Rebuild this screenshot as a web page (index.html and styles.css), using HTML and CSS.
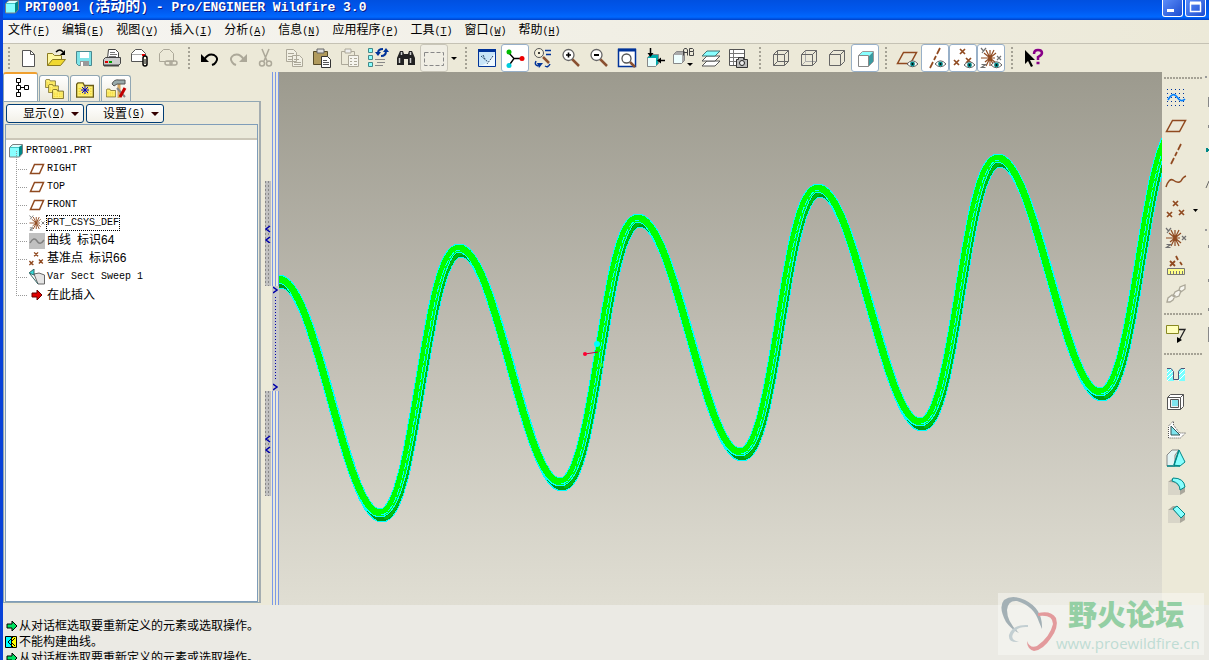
FILE: index.html
```
<!DOCTYPE html>
<html lang="zh-CN">
<head>
    <meta charset="UTF-8">
    <meta name="viewport" content="width=device-width, initial-scale=1.0">
    <title>PRT0001 (活动的) - Pro/ENGINEER Wildfire 3.0</title>
    <link rel="stylesheet" href="styles.css">
</head>
<body>
    <!-- shared icon shapes -->
    <svg class="defs" width="0" height="0" aria-hidden="true">
        <symbol id="plane" viewBox="0 0 24 24"><path d="M8.500 6.500h13l-6 11h-13z" fill="none" stroke="#904a20" stroke-width="1.500"/></symbol>
        <symbol id="plane-small" viewBox="0 0 16 16"><path d="M5.500 3.500h9l-4 9h-9z" fill="none" stroke="#904a20" stroke-width="1.500"/></symbol>
        <symbol id="axis" viewBox="0 0 24 24"><path d="M17 2l-3 6M13 10l-2 4M10 16l-3 6" stroke="#904a20" stroke-width="1.700"/></symbol>
        <symbol id="points" viewBox="0 0 24 24"><path d="M9 3l5 5M14 3l-5 5M3 14l5 5M8 14l-5 5M15 12l5 5M20 12l-5 5" stroke="#904a20" stroke-width="1.700"/></symbol>
        <symbol id="csys" viewBox="0 0 24 24">
            <path d="M2 12h14M11 4v16M7 4l8 16M15 4L7 20M5 7l12 10M17 7L6 16" stroke="#904a20" stroke-width="1.200"/>
            <path d="M2 2l2.500 3L7 2M4.500 5L3 7M18 10l4 4M22 10l-4 4M2.500 18.500h4l-4 3h4" fill="none" stroke="#707070" stroke-width="1.200"/>
        </symbol>
        <symbol id="eye" viewBox="0 0 12 8"><path d="M0 4q6-7 12 0q-6 6-12 0z" fill="#fff" stroke="#555"/><circle cx="6" cy="4" r="2.600" fill="#088"/><circle cx="6" cy="4" r="1" fill="#000"/></symbol>
        <symbol id="part" viewBox="0 0 14 14"><path d="M1 3l3-2h9v9l-3 3H1z" fill="#088"/><path d="M1 3l3-2h9l-3 2z" fill="#dff"/><path d="M1 3.500h9V13H1z" fill="#8ff"/><path d="M.5 3.500l3-3h10v9l-3 3.500H.5z" fill="none" stroke="#7a8080"/></symbol>
        <symbol id="lens" viewBox="0 0 24 24"><path d="M13 13l7 7" stroke="#8a5030" stroke-width="2.500"/><circle cx="9.500" cy="9" r="5.500" fill="#fff" stroke="#666" stroke-width="1.300"/></symbol>
        <symbol id="arrow" viewBox="0 0 12 12"><path d="M1 4h5V1l5 5l-5 5V8H1z"/></symbol>
        <symbol id="folder" viewBox="0 0 14 12"><path d="M.5 11.500v-10l1-1h4l1 2h7v9z" fill="#fff176" stroke="#6a5c18"/><path d="M2 5h10M2 7h10M2 9h10" stroke="#f0d430" stroke-dasharray="2 1"/></symbol>
    </svg>

    <div class="window">
        <header class="titlebar">
            <svg class="app-icon" width="14" height="14"><use href="#part"/></svg>
            <h1 class="title">PRT0001 (<span class="zh">活动的</span>) - Pro/ENGINEER Wildfire 3.0</h1>
            <div class="win-buttons">
                <button class="win-btn" aria-label="Minimize"><svg width="19" height="16"><path d="M4 9h7v3H4z" fill="#fff"/></svg></button>
                <button class="win-btn" aria-label="Maximize"><svg width="19" height="16"><path d="M4.500 3.500h10v8h-10z" fill="none" stroke="#fff" stroke-width="1.500"/><path d="M4 3h11" stroke="#fff" stroke-width="3"/></svg></button>
            </div>
        </header>

        <nav class="menubar">
            <button class="menu">文件<span class="en">(<u>F</u>)</span></button>
            <button class="menu">编辑<span class="en">(<u>E</u>)</span></button>
            <button class="menu">视图<span class="en">(<u>V</u>)</span></button>
            <button class="menu">插入<span class="en">(<u>I</u>)</span></button>
            <button class="menu">分析<span class="en">(<u>A</u>)</span></button>
            <button class="menu">信息<span class="en">(<u>N</u>)</span></button>
            <button class="menu">应用程序<span class="en">(<u>P</u>)</span></button>
            <button class="menu">工具<span class="en">(<u>T</u>)</span></button>
            <button class="menu">窗口<span class="en">(<u>W</u>)</span></button>
            <button class="menu">帮助<span class="en">(<u>H</u>)</span></button>
        </nav>

        <div class="toolbar">
            <span class="sep"></span>
            <button class="tool" aria-label="New"><svg class="icon"><path d="M6.500 4.500h8l4 4v12h-12z" fill="#fff" stroke="#555"/><path d="M14.500 4.500v4h4" fill="none" stroke="#555"/></svg></button>
            <button class="tool" aria-label="Open"><svg class="icon"><path d="M3.500 19.500v-12h5l2 2h7v4" fill="#fff8a0" stroke="#8a7a20"/><path d="M3.500 19.500l5-6h13l-5 6z" fill="#f0d830" stroke="#8a7a20"/><path d="M12 6q4-4 7 0" fill="none" stroke="#000" stroke-width="1.500"/><path d="M21 4v5h-5z"/></svg></button>
            <button class="tool" aria-label="Save"><svg class="icon"><path d="M4.500 5.500h15v14h-13l-2-2z" fill="#7fe4e8" stroke="#4a8890"/><path d="M8 6h9v6H8z" fill="#fff"/><path d="M8 15h9v5H8z" fill="#999"/><path d="M9 16h2v4H9z" fill="#fff"/></svg></button>
            <button class="tool" aria-label="Print"><svg class="icon"><path d="M8.500 3.500h7l3 3v6h-11z" fill="#fff" stroke="#444"/><path d="M10 6.500h5M10 8.500h7M9 10.500h7" stroke="#777"/><path d="M3.500 13.500l2-2h15v6l-2 2h-15z" fill="#ccc" stroke="#444"/><path d="M5 15h3v2H5z" fill="#d00"/><path d="M9 15h3v2H9z" fill="#090"/><path d="M4 19.500h15" stroke="#444" stroke-width="2"/></svg></button>
            <button class="tool" aria-label="Send"><svg class="icon"><path d="M3.500 15.500v-8l4-4h6l4 4v8z" fill="#fff" stroke="#555"/><path d="M4 8.500h13" stroke="#aaa"/><path d="M14 8h3v2h-3z" fill="#e00"/><rect x="15" y="10" width="4" height="10" rx="2" fill="#ffe" stroke="#000" stroke-width="1.500"/><path d="M17 13v5" stroke="#000"/></svg></button>
            <button class="tool" aria-label="Send link" disabled><svg class="icon"><path d="M3.500 15.500v-8l4-4h6l4 4v8z" fill="#ece9d8" stroke="#aca899"/><rect x="9" y="15" width="7" height="4" rx="2" fill="none" stroke="#aca899" stroke-width="1.500"/><rect x="14" y="15" width="7" height="4" rx="2" fill="none" stroke="#aca899" stroke-width="1.500"/></svg></button>
            <span class="sep"></span>
            <button class="tool" aria-label="Undo"><svg class="icon"><path d="M6 14q4-7 10-5q5 3 2 7q-1 2-4 3" fill="none" stroke="#000" stroke-width="2"/><path d="M3 8v8h8z"/></svg></button>
            <button class="tool" aria-label="Redo" disabled><svg class="icon"><path d="M18 14q-4-7-10-5q-5 3-2 7q1 2 4 3" fill="none" stroke="#aca899" stroke-width="2"/><path d="M21 8v8h-8z" fill="#aca899"/></svg></button>
            <button class="tool" aria-label="Cut" disabled><svg class="icon"><path d="M8 3l5 12M15 3l-5 12" stroke="#aca899" stroke-width="1.500"/><circle cx="8" cy="17.500" r="2.500" fill="none" stroke="#aca899" stroke-width="1.500"/><circle cx="15" cy="17.500" r="2.500" fill="none" stroke="#aca899" stroke-width="1.500"/></svg></button>
            <button class="tool" aria-label="Copy" disabled><svg class="icon"><path d="M4.500 3.500h7l3 3v9h-10zM10.500 9.500h7l3 3v8h-10z" fill="#f2f0e4" stroke="#aca899"/><path d="M6 7.500h6M6 10.500h4M6 13.500h4M12 13.500h5M12 16.500h7M12 18.500h7" stroke="#aca899"/></svg></button>
            <button class="tool" aria-label="Paste"><svg class="icon"><path d="M3.500 5.500h14v13h-14z" fill="#b09a5c" stroke="#554a28"/><path d="M7 3h7v4H7z" fill="#ddd" stroke="#666"/><path d="M11.500 10.500h6l3 3v8h-9z" fill="#fff" stroke="#333"/><path d="M13 14.500h4M13 16.500h6M13 18.500h6" stroke="#555"/></svg></button>
            <button class="tool" aria-label="Paste special" disabled><svg class="icon"><path d="M3.500 5.500h13v13h-13z" fill="#ece9d8" stroke="#aca899"/><path d="M7 3h6v4H7z" fill="#eee" stroke="#aca899"/><path d="M10.500 9.500h10v11h-10z" fill="#f6f5ee" stroke="#aca899"/><path d="M12 12.500h2M16 12.500h3M12 15.500h2M16 15.500h3M12 18.500h2M16 18.500h3" stroke="#aca899"/></svg></button>
            <button class="tool" aria-label="Regenerate"><svg class="icon"><path d="M2.500 2.500h4v4h-4zM2.500 9.500h4v4h-4zM2.500 16.500h4v4h-4z" fill="#8ff" stroke="#488"/><path d="M12 7q0-4 5-4M20 5q0 5-5 5" fill="none" stroke="#039" stroke-width="2"/><path d="M9 6h6l-3 4zM17 6h6l-3-4z" fill="#039"/><path d="M9 13.500h10M11 16.500h8M9 19.500h8" stroke="#888"/></svg></button>
            <button class="tool" aria-label="Find"><svg class="icon"><path d="M6 5h3l1 3h4l1-3h3l3 7v7h-7v-6h-4v6H3v-7z" fill="#222"/><path d="M5.500 12v5M16.500 12v5M7.500 6v3M16.500 6v3" stroke="#ccc" stroke-width="1.500"/></svg></button>
            <button class="tool framed" aria-label="Select"><svg class="icon"><path d="M2.500 6.500h19v13h-19z" fill="none" stroke="#888" stroke-dasharray="4 2"/></svg></button>
            <button class="drop" aria-label="Select options"><svg width="6" height="3"><path d="M0 0h6L3 3z"/></svg></button>
            <span class="sep"></span>
            <button class="tool" aria-label="Repaint"><svg class="icon"><path d="M3.500 4.500h17v16h-17z" fill="#c8e4f8" stroke="#039"/><path d="M3 4.500h18" stroke="#039" stroke-width="3"/><path d="M4 20q9-2 11-8l5-4v12z" fill="#eef8ff"/><path d="M18 10l-6 8M6 10l7 6M8 9l2 4" stroke="#246" stroke-dasharray="2 1"/></svg></button>
            <button class="tool on" aria-label="Spin center"><svg class="icon"><path d="M5 6l6 6.500h8M11 12.500l-5 7" fill="none" stroke="#000" stroke-width="1.300"/><circle cx="6" cy="6" r="2.500" fill="#0b0"/><circle cx="19" cy="12.500" r="2.500" fill="#e00"/><circle cx="6" cy="19.500" r="2.500" fill="#0cd"/></svg></button>
            <button class="tool" aria-label="Orient mode"><svg class="icon"><path d="M12 11l6 6" stroke="#8a5030" stroke-width="2.500"/><circle cx="8" cy="7" r="4.500" fill="#f4f0dc" stroke="#555"/><circle cx="8" cy="7" r="1"/><path d="M14 4.500h6M15 8.500h5M5 15q-2 4 2 5M14 20q3 2 5-2" fill="none" stroke="#039" stroke-width="1.500"/><path d="M6 17h6l-4 5z" fill="#039"/></svg></button>
            <button class="tool" aria-label="Zoom in"><svg class="icon"><use href="#lens"/><path d="M7 9h5M9.500 6.500v5" stroke="#000" stroke-width="1.600"/></svg></button>
            <button class="tool" aria-label="Zoom out"><svg class="icon"><use href="#lens"/><path d="M7 9h5" stroke="#000" stroke-width="2"/></svg></button>
            <button class="tool" aria-label="Refit"><svg class="icon"><path d="M3.500 3.500h17v17h-17z" fill="#fff" stroke="#039" stroke-width="1.500"/><path d="M3 4h18" stroke="#039" stroke-width="3"/><path d="M15 16l5 5" stroke="#8a5030" stroke-width="2.500"/><circle cx="11.500" cy="12.500" r="4.500" fill="#fff" stroke="#555" stroke-width="1.300"/></svg></button>
            <button class="tool" aria-label="Reorient"><svg class="icon"><path d="M4.500 11.500l3-3h8v9l-3 3h-8z" fill="#0aa" stroke="#888"/><path d="M5 12h8v8H5z" fill="#e8ffff"/><path d="M7.500 2v6M16 14.500h6" stroke="#000" stroke-width="1.500"/><path d="M4.500 7h6l-3 4zM18 11.500v6l-4-3z"/></svg></button>
            <button class="tool" aria-label="Saved views"><svg class="icon"><path d="M2.500 8.500l3-3h8v9l-3 3h-8z" fill="#aaa" stroke="#888"/><path d="M3 9h8v8H3z" fill="#eff"/><path d="M12.500 9.500V4l1-1.500h2l1 1.500v5.500M12.500 6.500h4M18.500 2.500h3l1 1v2h-4h3l1 1v3h-4z" fill="none" stroke="#444"/><path d="M16 17h6l-3 3z"/></svg></button>
            <button class="tool" aria-label="Layers"><svg class="icon"><path d="M3 20l5-5h13l-5 5z" fill="#fff" stroke="#555"/><path d="M3 15l5-5h13l-5 5z" fill="#fff" stroke="#555"/><path d="M3 10l5-5h13l-5 5z" fill="#8ff" stroke="#477"/></svg></button>
            <button class="tool" aria-label="View manager"><svg class="icon"><path d="M2.500 3.500h15v16h-15z" fill="#fff" stroke="#555"/><path d="M3 7.500h14M3 11.500h14M3 15.500h14M6.500 4v15" stroke="#777"/><path d="M9.500 13.500h2v-2h5v2h4v8h-11z" fill="#bbb" stroke="#333"/><circle cx="15" cy="17" r="2.500" fill="#eee" stroke="#222"/></svg></button>
            <span class="sep"></span>
            <button class="tool" aria-label="Wireframe"><svg class="icon"><path d="M4.500 8.500l4-4h11v11l-4 4h-11zM4.500 8.500h11v11M15.500 8.500l4-4M8.500 4.500v11h11M8.500 15.500l-4 4" fill="none" stroke="#666"/></svg></button>
            <button class="tool" aria-label="Hidden line"><svg class="icon"><path d="M8.500 4.500v11h11M8.500 15.500l-4 4" fill="none" stroke="#aaa"/><path d="M4.500 8.500l4-4h11v11l-4 4h-11zM4.500 8.500h11v11M15.500 8.500l4-4" fill="none" stroke="#666"/></svg></button>
            <button class="tool" aria-label="No hidden"><svg class="icon"><path d="M4.500 8.500l4-4h11v11l-4 4h-11zM4.500 8.500h11v11M15.500 8.500l4-4" fill="none" stroke="#666"/></svg></button>
            <button class="tool on" aria-label="Shading"><svg class="icon"><path d="M5 10l4-4h11l-4 4z" fill="#8ff"/><path d="M16 10l4-4v10l-4 4z" fill="#3a9aa0"/><path d="M5.500 9.500h10v11h-10z" fill="#fff" stroke="#888"/><path d="M5.500 9.500l4-4h11v10l-5 5" fill="none" stroke="#999"/></svg></button>
            <span class="sep"></span>
            <button class="tool" aria-label="Datum planes"><svg class="icon"><use href="#plane"/><use href="#eye" x="12" y="14" width="11" height="8"/></svg></button>
            <button class="tool on" aria-label="Datum axes"><svg class="icon"><use href="#axis"/><use href="#eye" x="12" y="14" width="11" height="8"/></svg></button>
            <button class="tool on" aria-label="Datum points"><svg class="icon"><use href="#points"/><use href="#eye" x="13" y="15" width="11" height="8"/></svg></button>
            <button class="tool on" aria-label="Coordinate systems"><svg class="icon"><use href="#csys"/><use href="#eye" x="12" y="15" width="11" height="8"/></svg></button>
            <span class="sep"></span>
            <button class="tool" aria-label="Help"><svg class="icon"><path d="M4 4v14l3-3l3 6l2-1l-3-6h5z"/><path d="M13 8q0-4 4-4q4 0 4 3q0 2-4 4v3M15.500 17h3" fill="none" stroke="#808" stroke-width="2.500"/></svg></button>
        </div>

        <main class="main">
            <aside class="side">
                <div class="tabs">
                    <button class="tab active" aria-label="Model tree"><svg class="icon"><path d="M7.500 2.500h4v4h-4zM7.500 9.500h4v4h-4zM7.500 16.500h4v4h-4zM15.500 9.500h4v4h-4zM9.500 7v2M9.500 14v2M12 11.500h3" fill="#fff" stroke="#000"/></svg></button>
                    <button class="tab" aria-label="Folders"><svg class="icon"><use href="#folder" x="3" y="2" width="11" height="9"/><use href="#folder" x="6" y="7" width="11" height="9"/><use href="#folder" x="10" y="12" width="12" height="10"/></svg></button>
                    <button class="tab" aria-label="Favorites"><svg class="icon"><use href="#folder" x="3" y="5" width="18" height="16"/><path d="M12 9v8M8 13h8M9 10l6 6M15 10l-6 6" stroke="#00c"/></svg></button>
                    <button class="tab" aria-label="Connections"><svg class="icon"><path d="M15 5v16" stroke="#d8a860" stroke-width="3"/><path d="M8 7q2-5 7-4h6v4h-8l-3 2z" fill="#9aa" stroke="#555"/><path d="M13 11l8 9" stroke="#888" stroke-width="2"/><path d="M21 11l-5 9" stroke="#c20000" stroke-width="3"/><use href="#folder" x="2" y="11" width="10" height="10"/></svg></button>
                </div>
                <div class="panel">
                    <div class="panel-buttons">
                        <button class="xp-btn">显示<span class="en">(<u>O</u>)</span><svg width="8" height="4"><path d="M0 0h8L4 4z" fill="#300"/></svg></button>
                        <button class="xp-btn">设置<span class="en">(<u>G</u>)</span><svg width="8" height="4"><path d="M0 0h8L4 4z" fill="#300"/></svg></button>
                    </div>
                    <div class="tree-box">
                        <div class="tree-head"></div>
                        <div class="tree">
                            <div class="node root"><svg width="14" height="14"><use href="#part"/></svg><span class="en">PRT0001.PRT</span></div>
                            <ul class="children">
                                <li class="node"><svg width="16" height="16"><use href="#plane-small"/></svg><span class="en">RIGHT</span></li>
                                <li class="node"><svg width="16" height="16"><use href="#plane-small"/></svg><span class="en">TOP</span></li>
                                <li class="node"><svg width="16" height="16"><use href="#plane-small"/></svg><span class="en">FRONT</span></li>
                                <li class="node"><svg width="16" height="16"><use href="#csys" x="-1" y="-1" width="18" height="18"/></svg><span class="en focus">PRT_CSYS_DEF</span></li>
                                <li class="node"><svg width="16" height="16"><path d="M0 0h16v16H0z" fill="#c0c0c0"/><path d="M1 10q4-7 7-2t7-1" fill="none" stroke="#808080" stroke-width="1.500"/></svg><span>曲线<span class="en"> </span>标识64</span></li>
                                <li class="node"><svg width="16" height="16"><use href="#points" x="-2" y="-1" width="19" height="19"/></svg><span>基准点<span class="en"> </span>标识66</span></li>
                                <li class="node"><svg width="16" height="16"><path d="M5 5l5-1l5.500 2v9H9z" fill="#e4e4e4" stroke="#666"/><path d="M0 4l5-4v6z" fill="#3dd" stroke="#366"/><path d="M1 5l8 10" stroke="#366"/></svg><span class="en">Var Sect Sweep 1</span></li>
                                <li class="node"><svg width="16" height="16"><use href="#arrow" x="2" y="2" width="12" height="12" fill="#e00000" stroke="#600"/></svg><span>在此插入</span></li>
                            </ul>
                        </div>
                    </div>
                </div>
            </aside>

            <div class="sash">
                <div class="sash-left">
                    <button class="grip" aria-label="Collapse"><svg width="6" height="18"><path d="M5 1L1 4l4 3M5 12l-4 3l4 3" fill="none" stroke="#00a" stroke-width="1.500"/></svg></button>
                    <button class="grip" aria-label="Collapse"><svg width="6" height="18"><path d="M5 1L1 4l4 3M5 12l-4 3l4 3" fill="none" stroke="#00a" stroke-width="1.500"/></svg></button>
                </div>
                <div class="sash-right">
                    <span class="rails"></span>
                    <button class="expand" aria-label="Expand">
                        <svg width="5" height="8"><path d="M0 1l4 3l-4 3" fill="none" stroke="#00a" stroke-width="1.500"/></svg>
                        <span class="dots"></span>
                        <svg width="5" height="8"><path d="M0 1l4 3l-4 3" fill="none" stroke="#00a" stroke-width="1.500"/></svg>
                    </button>
                    <span class="rails"></span>
                </div>
            </div>

            <section class="canvas">
                <svg class="model" viewBox="279 72 883 533" preserveAspectRatio="xMinYMin slice">
                    <defs>
                        <path id="wave" d="M269 281Q274 279 279 279C316 279 344 513 380 513C416 513 423 248 459 248C496 248 524 482 560 482C596 482 602 218 638 218C675 218 704 452 740 452C776 452 782 188 818 188C855 188 884 422 920 422C956 422 962 158 998 158C1035 158 1064 392 1100 392C1136 392 1142 128 1178 128"/>
                        <path id="rises" d="M380 513C416 513 423 248 459 248M560 482C596 482 602 218 638 218M740 452C776 452 782 188 818 188M920 422C956 422 962 158 998 158M1100 392C1136 392 1142 128 1178 128"/>
                    </defs>
                    <!-- back wall of the sweep, then the lit front wall -->
                    <g fill="none" shape-rendering="crispEdges">
                        <g transform="translate(2 5)">
                            <use href="#wave" stroke="#00ffff" stroke-width="9"/>
                            <use href="#wave" stroke="#009c10" stroke-width="7"/>
                            <use href="#rises" stroke="#00c010" stroke-width="3" transform="translate(2 0)"/>
                        </g>
                        <use href="#wave" stroke="#00ffff" stroke-width="9"/>
                        <use href="#wave" stroke="#00ff00" stroke-width="7"/>
                        <use href="#rises" stroke="#00ffff" stroke-width="1" stroke-dasharray="7 2" transform="translate(1 2)"/>
                    </g>
                    <path d="M585 354l13-2" stroke="#c00040"/>
                    <circle cx="585" cy="354" r="2" fill="#ff0030"/>
                    <circle cx="597" cy="344" r="3" fill="#00ffff"/>
                    <circle cx="601" cy="365" r="2" fill="#30ff30"/>
                </svg>
            </section>

            <div class="rail">
                <span class="hsep"></span>
                <button class="tool" aria-label="Sketch"><svg class="icon"><path d="M3 3.500h18M3 7.500h18M3 11.500h18M3 15.500h18M3 19.500h18" stroke="#039" stroke-dasharray="1 3"/><path d="M4 14q5-9 9-3t8 2" fill="none" stroke="#0080ff" stroke-width="1.700"/></svg></button>
                <button class="tool" aria-label="Plane"><svg class="icon"><use href="#plane"/></svg></button>
                <button class="tool" aria-label="Axis"><svg class="icon"><use href="#axis"/></svg></button>
                <button class="tool" aria-label="Curve"><svg class="icon"><path d="M2 17q3-9 7-7q5 4 8 1q2-4 5-5" fill="none" stroke="#904a20" stroke-width="1.500"/></svg></button>
                <div class="tool-row">
                    <button class="tool" aria-label="Point"><svg class="icon"><use href="#points"/></svg></button>
                    <button class="drop" aria-label="Point options"><svg width="5" height="3"><path d="M0 0h5L2.500 3z"/></svg></button>
                </div>
                <button class="tool" aria-label="Coordinate system"><svg class="icon"><use href="#csys"/></svg></button>
                <button class="tool" aria-label="Analysis"><svg class="icon"><path d="M6 7l5 5M11 7l-5 5M12 2l2 4M16 8l2 3" stroke="#904a20" stroke-width="1.800"/><path d="M3.500 14.500h17v6h-17z" fill="#ff8" stroke="#777"/><path d="M6.500 17v3M9.500 17v3M12.500 17v3M15.500 17v3M18.500 17v3" stroke="#777"/></svg></button>
                <button class="tool" aria-label="Reference" disabled><svg class="icon"><path d="M3 20l1-4l4-3l3 1l-2 4l-3 2zM9 14l2-4l4-2l2 1l-2 5l-3 1zM15 8l1-3l5-2v4l-4 3z" fill="#f6f5ee" stroke="#aca899" stroke-width="1.300"/></svg></button>
                <span class="hsep"></span>
                <button class="tool" aria-label="Annotation"><svg class="icon"><path d="M2.500 3.500h12v8h-12z" fill="#ffb" stroke="#882"/><path d="M15 7.500h6l-6 11" fill="none" stroke="#222" stroke-width="1.300"/><path d="M13 15v6l5-3z"/></svg></button>
                <span class="hsep"></span>
                <button class="tool" aria-label="Hole"><svg class="icon"><path d="M3 6h4l3 3v10H3zM21 6h-4l-3 3v10h7z" fill="#7ff"/><path d="M3 11l4-4M3 15l7-7M3 19l7-7M14 14l7-7M14 19l7-7" stroke="#fff"/><path d="M3 6.500h4l2.500 3v8h5v-8l2.500-3h4" fill="none" stroke="#557"/></svg></button>
                <button class="tool" aria-label="Shell"><svg class="icon"><path d="M3.500 7.500l3-3h13v12l-3 3h-13z" fill="#fff" stroke="#555"/><path d="M3.500 7.500h13v12M16.500 7.500l3-3" fill="none" stroke="#555"/><path d="M6.500 9.500h8v8h-8z" fill="#eee" stroke="#555"/><path d="M8 10h6v6H8z" fill="#7fe4ee"/></svg></button>
                <button class="tool" aria-label="Rib"><svg class="icon"><path d="M4.500 20v-12l5-5v4l6 8h6l-5 5z" fill="#fff" stroke="#555" stroke-dasharray="1 1"/><path d="M7 17V8l9 9z" fill="#7fe4ee" stroke="#355"/></svg></button>
                <button class="tool" aria-label="Draft"><svg class="icon"><path d="M3 9l5-5h7l-4 5v11H3z" fill="#e4f4f4" stroke="#888"/><path d="M10 19l5-15l6 12l-5 4z" fill="#8ff" stroke="#088"/><path d="M3 20h13M15 4l-5 15" fill="none" stroke="#088" stroke-width="1.500"/></svg></button>
                <button class="tool" aria-label="Round"><svg class="icon"><path d="M4 8l5-4q11 0 12 9v5l-5 3H4z" fill="#aaa79c"/><path d="M4 8q10-1 12 8v5H4z" fill="#d8d5c8"/><path d="M9 4q11 0 12 9l-5 3q0-7-8-9z" fill="#8ff" stroke="#088"/></svg></button>
                <button class="tool" aria-label="Chamfer"><svg class="icon"><path d="M4 8l5-4h4l8 8v6l-5 3H4z" fill="#aaa79c"/><path d="M4 8h5l7 7v6H4z" fill="#d8d5c8"/><path d="M9 7l4-3l8 8l-4 4z" fill="#8ff" stroke="#088"/></svg></button>
            </div>
            <div class="rail-cut">
                <svg width="4" height="300"><path d="M0 5h2" stroke="#999" stroke-width="2"/><path d="M3 25h1v10H3zM3 53h1v3H3zM3 173h1v3H3zM3 207h1v3H3zM3 236h1v3H3zM3 255h1v15H3z" fill="#888"/><path d="M1 78h3M2 76v4" stroke="#088" stroke-width="2"/><path d="M4 109l-3 7" stroke="#666"/><path d="M0 158h2" stroke="#999" stroke-width="2"/></svg>
            </div>
        </main>

        <footer class="messages">
            <p class="message"><svg width="14" height="12"><use href="#arrow" x="1" width="12" height="12" fill="#00e060" stroke="#000"/></svg>从对话框选取要重新定义的元素或选取操作。</p>
            <p class="message"><svg width="14" height="12"><path d="M.5.500h6v11h-6z" fill="#0ff" stroke="#000"/><path d="M6.500.500h5v11h-5z" fill="#ff0" stroke="#000"/><path d="M8 1L3 6l5 5M10 2L6 6l4 4" fill="none" stroke="#000"/></svg>不能构建曲线。</p>
            <p class="message"><svg width="14" height="12"><use href="#arrow" x="1" width="12" height="12" fill="#00e060" stroke="#000"/></svg>从对话框选取要重新定义的元素或选取操作。</p>
        </footer>

        <div class="watermark">
            <svg width="60" height="60" viewBox="0 0 60 60">
                <path fill-rule="evenodd" fill="#a3b0b5" d="M43 36Q44 16 26 7Q13 1 5 7Q-1 14 7 29Q13 37 20 40Q8 29 8 17Q9 7 18 8Q35 13 40 29Z"/>
                <path fill="#e39a9c" d="M39 20Q52 17 57 25Q60 34 52 45Q44 57 35 58Q28 56 28 48Q31 56 38 53Q51 44 54 31Q54 21 39 23Z"/>
                <path fill="#c3cfd2" d="M29 32Q14 31 10 42Q9 50 20 49Q11 47 14 41Q18 33 29 34Z"/>
            </svg>
            <div class="watermark-text">
                <span class="brand">野火论坛</span>
                <span class="url">www.proewildfire.cn</span>
            </div>
        </div>
    </div>
</body>
</html>
```
FILE: styles.css
```
* {
    box-sizing: border-box;
}

body {
    margin: 0;
    font-family: "Liberation Sans", "Noto Sans CJK SC", sans-serif;
    font-size: 12px;
    line-height: 16px;
    color: #000;
    background-color: #ece9d8;
}

button {
    padding: 0;
    border: none;
    background: none;
    font: inherit;
    color: inherit;
}

svg {
    display: block;
    flex: none;
}

.defs {
    position: absolute;
}

.en {
    font-family: "Liberation Mono", monospace;
    font-size: 10px;
    white-space: pre;
}

.window {
    position: relative;
    display: flex;
    flex-direction: column;
    height: 100vh;
    overflow: hidden;
    border-left: 3px solid #0842d8;
}

/* title bar */
.titlebar {
    display: flex;
    flex: none;
    align-items: flex-start;
    height: 20px;
    padding-left: 2px;
    background: linear-gradient(#0050e0, #0058ee 50%, #0068ff 85%, #0040c8);
}

.title {
    flex: 1;
    margin: 0 0 0 6px;
    font-family: "Liberation Mono", "Noto Sans CJK SC", monospace;
    font-size: 13px;
    line-height: 16px;
    color: #fff;
    text-shadow: 1px 1px #0a1883;
    white-space: nowrap;
}

.title .zh {
    font-size: 15px;
}

.win-buttons {
    display: flex;
    gap: 2px;
    padding-right: 3px;
}

.win-btn {
    height: 17px;
    border: 1px solid #fff;
    border-top: none;
    border-radius: 0 0 3px 3px;
    background: linear-gradient(135deg, #5a8cf8, #1c4cd0);
}

/* menu bar */
.menubar {
    display: flex;
    flex: none;
    gap: 12px;
    height: 24px;
    padding: 0 5px 2px;
    border-bottom: 1px solid #c5c2b4;
    background: linear-gradient(90deg, #f6f5f2, #ece9d8);
}

.menu {
    white-space: nowrap;
}

/* toolbars */
.toolbar {
    display: flex;
    flex: none;
    height: 28px;
}

.tool {
    display: flex;
    flex: none;
    align-items: center;
    justify-content: center;
    width: 28px;
    height: 28px;
}

.tool.on {
    border: 1px solid #98b0c8;
    border-radius: 3px;
    background-color: #fff;
}

.tool.framed {
    border: 1px solid #c8c5b8;
    border-radius: 3px;
    background-color: #f0eee4;
}

.icon {
    width: 24px;
    height: 24px;
    fill: #000;
}

.drop {
    display: flex;
    align-items: center;
    justify-content: center;
    width: 11px;
}

.sep {
    width: 14px;
    margin: 3px 0;
    background: repeating-linear-gradient(#a5a295 0 2px, transparent 2px 4px) center / 2px 100% no-repeat;
}

.sep:first-child {
    width: 11px;
}

.main {
    display: flex;
    flex: 1;
    min-height: 0;
}

/* navigator */
.side {
    display: flex;
    flex: none;
    flex-direction: column;
    width: 258px;
    padding-bottom: 2px;
}

.tabs {
    display: flex;
    align-items: flex-end;
    gap: 1px;
    height: 29px;
}

.tab {
    display: flex;
    align-items: center;
    justify-content: center;
    width: 30px;
    height: 26px;
    border: 1px solid #91a7b4;
    border-bottom: none;
    border-radius: 3px 3px 0 0;
    background: linear-gradient(#fff, #ece9dc);
}

.tab.active {
    width: 35px;
    height: 29px;
    border-top: 2px solid #f0a030;
    background: #fff;
}

.panel {
    display: flex;
    flex: 1;
    flex-direction: column;
    min-height: 0;
    border: 1px solid #91a7b4;
    border-right: 2px solid #a5adb0;
}

.panel-buttons {
    display: flex;
    gap: 2px;
    padding: 2px 2px 1px;
}

.xp-btn {
    display: flex;
    align-items: center;
    justify-content: center;
    width: 78px;
    height: 19px;
    padding-left: 12px;
    border: 1px solid #003c74;
    border-radius: 3px;
    background: linear-gradient(#fff, #f2f0e8);
}

.xp-btn svg {
    margin-left: 6px;
}

.tree-box {
    display: flex;
    flex: 1;
    flex-direction: column;
    margin: 0 1px;
    border: 1px solid #7f9db9;
    background-color: #fff;
}

.tree-head {
    height: 15px;
    border-bottom: 2px solid #cbc7b8;
    background-color: #ebeadb;
}

.tree {
    padding: 2px 3px;
}

.node {
    display: flex;
    align-items: center;
    gap: 2px;
    height: 18px;
    white-space: nowrap;
}

.node.root {
    gap: 3px;
}

.children {
    margin: 0 0 0 7px;
    padding: 0;
    list-style: none;
}

.children .node::before {
    content: "";
    width: 10px;
    height: 18px;
    margin-top: -18px;
    border-left: 1px dotted #999;
    border-bottom: 1px dotted #999;
}

.focus {
    line-height: 14px;
    outline: 1px dotted #000;
}

/* splitter */
.sash {
    display: flex;
    flex: none;
    width: 18px;
}

.sash-left {
    display: flex;
    flex: none;
    flex-direction: column;
    align-items: center;
    justify-content: center;
    gap: 105px;
    width: 11px;
    padding-left: 2px;
}

.grip {
    display: flex;
    align-items: center;
    width: 6px;
    height: 105px;
    background: repeating-conic-gradient(#c0c0c0 0 75%, #888 0 100%) 0 0 / 3px 4px;
}

.sash-right {
    display: flex;
    flex: none;
    flex-direction: column;
    width: 7px;
}

.rails {
    flex: 1;
    background: repeating-linear-gradient(90deg, #7b98e8 0 1px, #ece9d8 1px 3px);
}

.expand {
    display: flex;
    flex-direction: column;
    align-items: center;
    height: 105px;
    background-color: #c8c8c8;
}

.dots {
    flex: 1;
    width: 1px;
    margin: 3px 0;
    background: repeating-linear-gradient(#00a 0 1px, transparent 1px 3px);
}

/* graphics area */
.canvas {
    flex: 1;
    min-width: 0;
    background: linear-gradient(#9c9a8e, #c0bdb3 50%, #e0ded3);
}

.model {
    width: 100%;
    height: 100%;
}

/* feature toolbar */
.rail {
    flex: none;
    width: 43px;
}

.hsep {
    display: block;
    height: 12px;
    margin: 0 3px 0 2px;
    background: repeating-linear-gradient(90deg, #a5a295 0 2px, transparent 2px 3px) center / 100% 2px no-repeat;
}

.tool-row {
    display: flex;
}

.rail-cut {
    flex: none;
    width: 4px;
}

/* message log */
.messages {
    flex: none;
    height: 55px;
    padding: 13px 2px 0;
    overflow: hidden;
    background-color: #ebeae4;
}

.message {
    display: flex;
    align-items: center;
    height: 16px;
    margin: 0;
    white-space: nowrap;
}

.watermark {
    position: absolute;
    right: 5px;
    bottom: 5px;
    display: flex;
    width: 206px;
    height: 62px;
    padding-left: 1px;
    background-color: rgba(250, 250, 245, 0.5);
}

.watermark-text {
    display: flex;
    flex-direction: column;
    margin-left: -3px;
}

.brand {
    padding-left: 12px;
    font-family: "Noto Sans CJK SC", sans-serif;
    font-size: 29px;
    font-weight: 900;
    line-height: 40px;
    color: #94cfa4;
}

.url {
    font-family: "Open Sans", sans-serif;
    font-size: 15px;
    line-height: 20px;
    color: #bfdcd4;
}
```
